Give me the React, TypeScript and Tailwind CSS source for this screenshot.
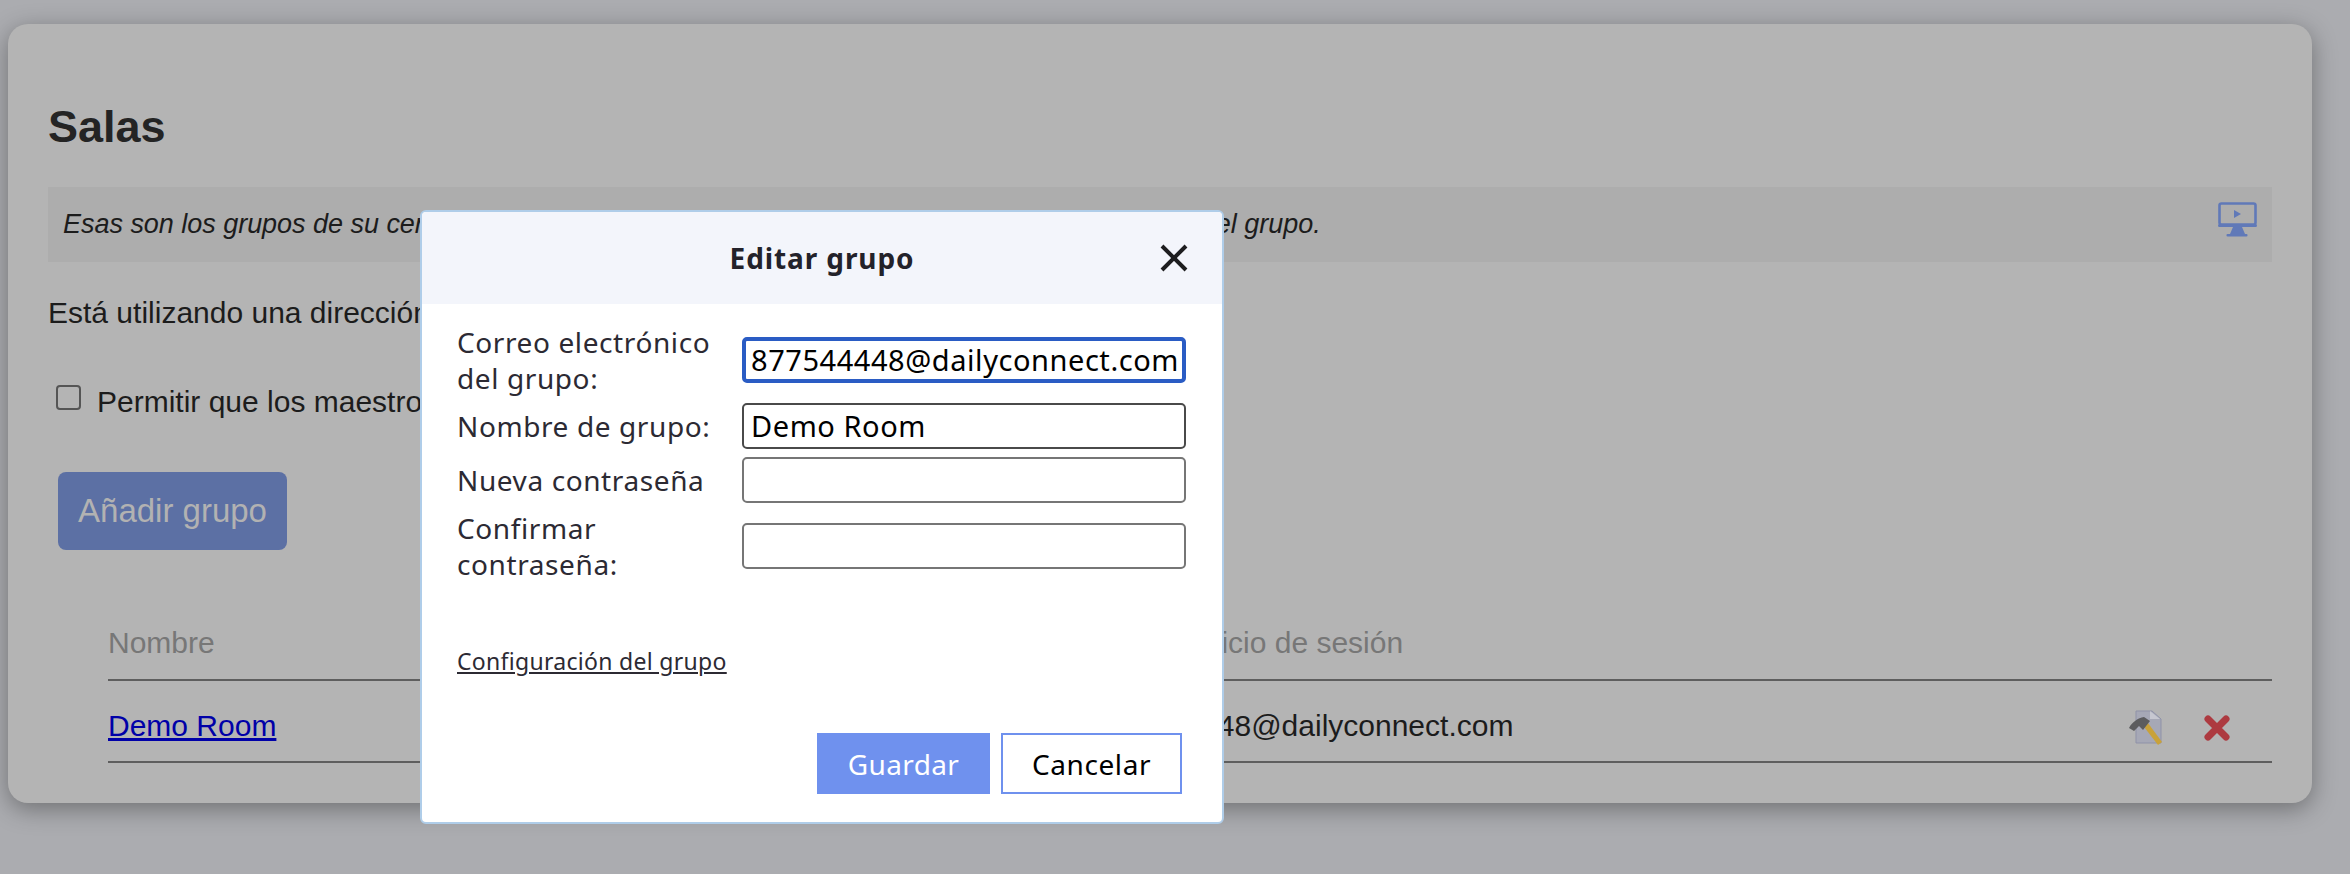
const sans = "font-['Liberation_Sans',Arial,sans-serif]";
const modalFont = "font-['Noto_Sans',sans-serif]";

const MonitorIcon = () => (
  <svg width="40" height="36" viewBox="0 0 40 36" className="mb-[10px] blur-[0.4px]">
    <rect x="1.5" y="1.5" width="36" height="21" rx="2" fill="none" stroke="#6079b8" strokeWidth="2.6" />
    <rect x="0" y="22" width="39" height="3" rx="1.5" fill="#6079b8" />
    <path d="M16 8l7 4-7 4z" fill="#6079b8" />
    <path d="M15 25h9l3 7h-15z" fill="#6079b8" />
    <rect x="8.5" y="32" width="21" height="2.5" rx="1" fill="#6079b8" />
  </svg>
);

const HammerIcon = () => (
  <svg width="36" height="36" viewBox="0 0 36 36" className="mt-[6px] blur-[0.4px]">
    <path d="M8 1h16l9 8v24H8z" fill="#a6a8b6" stroke="#8f92a8" strokeWidth="1" />
    <path d="M22 1v8h10z" fill="#c6c7d0" />
    <path d="M13 13l4-4 17 23-4 3z" fill="#c9a23a" />
    <path d="M1 18c3-6 9-10 15-11l6 4-7 9-4-4-5 5z" fill="#5c5c5e" />
  </svg>
);

const RemoveIcon = () => (
  <svg width="28" height="28" viewBox="0 0 28 28" className="mt-[6px] blur-[0.5px]">
    <path d="M5 5L23 23M23 5L5 23" stroke="#ad3a40" strokeWidth="7" strokeLinecap="round" />
  </svg>
);

const Field = ({ label, value, focused, rowClass }: { label: string; value?: string; focused?: boolean; rowClass?: string }) => (
  <div className={`flex items-center ${rowClass ?? ""}`}>
    <label className="w-[285px] shrink-0 text-[28px] leading-[36px] tracking-[0.6px] text-[#2c2a33]">{label}</label>
    <div
      className={`flex h-[46px] w-[446px] items-center overflow-hidden rounded-[5px] bg-white text-[29px] tracking-[0.55px] whitespace-nowrap text-black ${
        focused
          ? "border-[4px] border-[#2a5cc4] pl-[5px]"
          : value
            ? "border-2 border-[#4a4a4a] pl-[7px]"
            : "border-2 border-[#767676] pl-[7px]"
      }`}
    >
      {value}
    </div>
  </div>
);

const EditGroupModal = () => (
  <div className={`absolute top-[210px] left-[420px] flex h-[614px] w-[804px] flex-col overflow-hidden rounded-[6px] border-2 border-[#afcde9] bg-white ${modalFont}`}>
    <div className="relative flex h-[92px] shrink-0 items-center justify-center bg-[#f3f5fb]">
      <h2 className="text-[28px] font-bold tracking-[0.9px] text-[#23222a]">Editar grupo</h2>
      <svg width="30" height="30" viewBox="0 0 30 30" className="absolute top-[31px] right-[33px]">
        <path d="M3 3L27 27M27 3L3 27" stroke="#1d1d1f" strokeWidth="4" />
      </svg>
    </div>
    <div className="flex flex-1 flex-col pt-[20px] pr-[36px] pl-[35px]">
      <div className="flex flex-col">
        <Field label="Correo electrónico del grupo:" value="877544448@dailyconnect.com" focused />
        <Field label="Nombre de grupo:" value="Demo Room" rowClass="mt-[7px]" />
        <Field label="Nueva contraseña" rowClass="mt-[8px]" />
        <Field label="Confirmar contraseña:" rowClass="mt-[7px]" />
      </div>
      <a className="mt-[63px] text-[23px] leading-[32px] tracking-[0.3px] text-[#2c2a33] underline">Configuración del grupo</a>
      <div className="mt-[56px] flex justify-end gap-[11px] pr-[4px]">
        <button className="h-[61px] w-[173px] bg-[#6f91ee] text-[28px] tracking-[0.4px] text-white">Guardar</button>
        <button className="h-[61px] w-[181px] border-2 border-[#6f91ee] bg-white text-[28px] tracking-[0.6px] text-black">Cancelar</button>
      </div>
    </div>
  </div>
);

export default function App() {
  return (
    <div className={`relative h-[874px] w-full overflow-hidden bg-[#abacb0] pt-[24px] pl-[8px] ${sans}`}>
      <div className="h-[779px] w-[2304px] rounded-[20px] bg-[#b4b4b4] pt-[77px] pr-[40px] pl-[40px] shadow-[0_6px_24px_rgba(0,0,0,0.35)]">
        <h1 className="text-[45px] leading-[52px] font-bold text-[#242424]">Salas</h1>
        <div className="mt-[34px] flex h-[75px] items-center justify-between bg-[#adadad] pr-[14px] pl-[15px]">
          <p className="text-[27px] tracking-[-0.03px] text-[#1c1c1c] italic">Esas son los grupos de su centros. Haga clic en el nombre de cada grupo para ver los detalles del grupo.</p>
          <MonitorIcon />
        </div>
        <p className="mt-[33px] text-[30px] leading-[36px] text-[#1c1c1c]">Está utilizando una dirección de correo electrónico como inicio de sesión.</p>
        <div className="mt-[53px] flex items-center pl-[8px]">
          <span className="mb-[10px] h-[25px] w-[25px] rounded-[4px] border-2 border-[#555555]" />
          <span className="ml-[16px] text-[30px] leading-[36px] text-[#1c1c1c]">Permitir que los maestros editen los grupos</span>
        </div>
        <button className="mt-[52px] ml-[10px] block h-[78px] w-[229px] rounded-[8px] bg-[#5c70a4] text-[33px] text-[#b2b2b2]">Añadir grupo</button>
        <div className="mt-[41px] pl-[60px]">
          <div className="grid h-[90px] grid-cols-[990px_1fr] items-center border-b-2 border-[#5e5e5e] pt-[15px] text-[30px] text-[#777777]">
            <span>Nombre</span>
            <span>Correo inicio de sesión</span>
          </div>
          <div className="grid h-[82px] grid-cols-[993px_1fr_147px] items-center border-b-2 border-[#5e5e5e] pt-[8px] text-[30px] text-[#1c1c1c]">
            <a className="text-[#0000a8] underline">Demo Room</a>
            <span>877544448@dailyconnect.com</span>
            <div className="flex items-center gap-[39px] pl-[3px]">
              <HammerIcon />
              <RemoveIcon />
            </div>
          </div>
        </div>
      </div>
      <EditGroupModal />
    </div>
  );
}
